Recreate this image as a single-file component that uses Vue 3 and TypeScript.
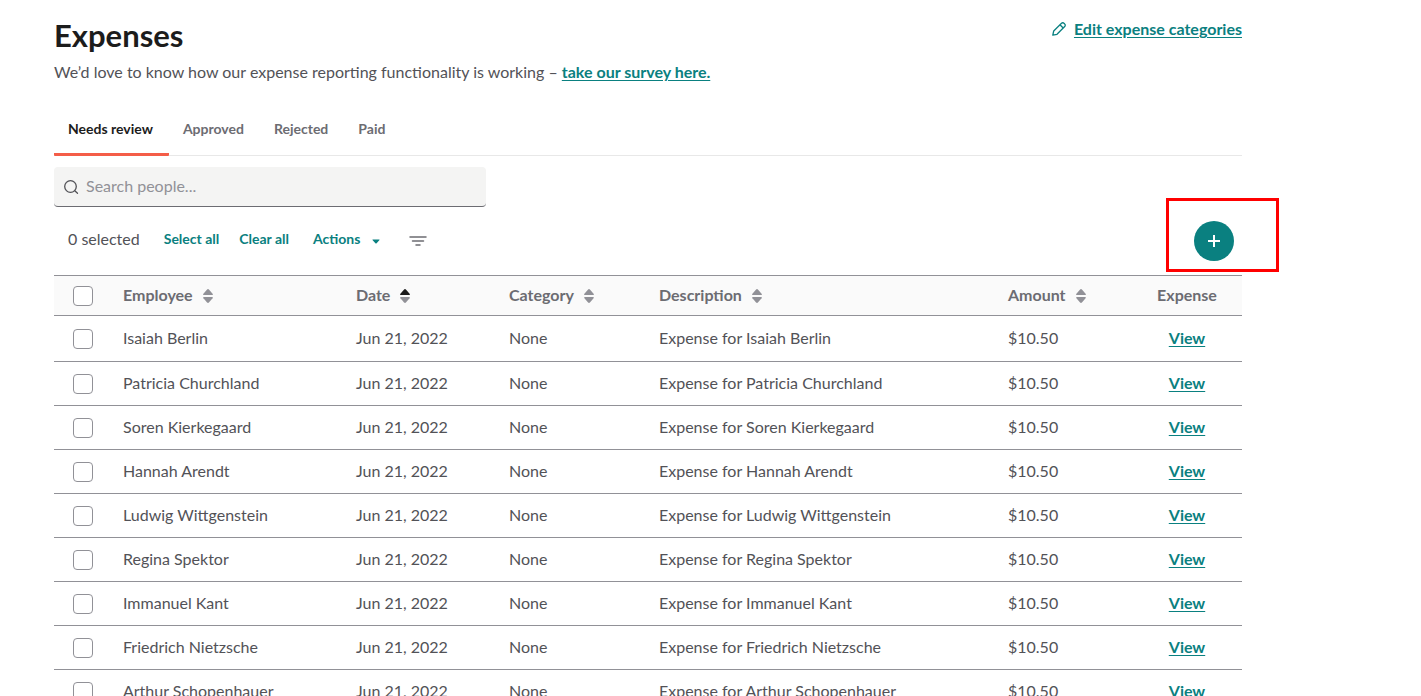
<script setup lang="ts">
import { ref } from 'vue'

interface Column {
  key: string
  label: string
  sortable: boolean
}

const tabs = ['Needs review', 'Approved', 'Rejected', 'Paid']
const activeTab = ref('Needs review')
const search = ref('')
const selected = ref<string[]>([])
const sortKey = ref('date')

const columns: Column[] = [
  { key: 'employee', label: 'Employee', sortable: true },
  { key: 'date', label: 'Date', sortable: true },
  { key: 'category', label: 'Category', sortable: true },
  { key: 'description', label: 'Description', sortable: true },
  { key: 'amount', label: 'Amount', sortable: true },
  { key: 'expense', label: 'Expense', sortable: false },
]

const employees = [
  'Isaiah Berlin',
  'Patricia Churchland',
  'Soren Kierkegaard',
  'Hannah Arendt',
  'Ludwig Wittgenstein',
  'Regina Spektor',
  'Immanuel Kant',
  'Friedrich Nietzsche',
  'Arthur Schopenhauer',
]

function selectAll() {
  selected.value = [...employees]
}
function clearAll() {
  selected.value = []
}
function toggleAll(e: Event) {
  if ((e.target as HTMLInputElement).checked) selectAll()
  else clearAll()
}
</script>

<template>
  <main class="page">
    <header class="head">
      <h1>Expenses</h1>
      <a class="edit" href="#categories">
        <svg width="16" height="16" viewBox="0 0 16 16" fill="none" stroke="currentColor" stroke-width="1.3" stroke-linejoin="round" aria-hidden="true">
          <path d="M1.800 14.200l.9-4.200L10.500 2.300a1.700 1.700 0 0 1 2.500 0l.7.7a1.700 1.700 0 0 1 0 2.500L6 13.300z" />
          <path d="M9 3.800l3.200 3.200" />
        </svg>
        <span>Edit expense categories</span>
      </a>
    </header>
    <p class="intro">
      We’d love to know how our expense reporting functionality is working –
      <a href="#survey">take our survey here.</a>
    </p>

    <nav class="tabs">
      <button
        v-for="tab in tabs"
        :key="tab"
        type="button"
        :class="{ active: tab === activeTab }"
        @click="activeTab = tab"
      >{{ tab }}</button>
    </nav>

    <label class="search">
      <svg width="16" height="16" viewBox="0 0 16 16" fill="none" stroke="currentColor" stroke-width="1.3" stroke-linecap="round" aria-hidden="true">
        <circle cx="7.500" cy="7.500" r="5.800" />
        <path d="M11.800 11.800l2.700 2.500" />
      </svg>
      <input v-model="search" type="text" placeholder="Search people..." aria-label="Search people" />
    </label>

    <div class="toolbar">
      <span class="count">{{ selected.length }} selected</span>
      <button class="text-btn" type="button" @click="selectAll">Select all</button>
      <button class="text-btn" type="button" @click="clearAll">Clear all</button>
      <button class="text-btn actions" type="button">
        Actions
        <svg width="8" height="5" viewBox="0 0 8 5" aria-hidden="true"><path d="M1 .5h6c.6 0 .7.400.3.800L4.600 4.200c-.4.400-.8.400-1.200 0L.7 1.300C.3.900.4.500 1 .5z" fill="currentColor" /></svg>
      </button>
      <button class="filter" type="button" aria-label="Filter">
        <svg width="18" height="12" viewBox="0 0 18 12" fill="none" stroke="currentColor" stroke-width="1.500" stroke-linecap="round" aria-hidden="true">
          <path d="M1 2h16M3.500 6h11M7 10h4" />
        </svg>
      </button>
      <div class="add-wrap">
        <button class="add" type="button" aria-label="Add expense">
          <svg width="12" height="12" viewBox="0 0 12 12" stroke="currentColor" stroke-width="2" aria-hidden="true"><path d="M6 0v12M0 6h12" /></svg>
        </button>
        <span class="callout"></span>
      </div>
    </div>

    <table>
      <colgroup>
        <col class="c-check" />
        <col v-for="c in columns" :key="c.key" :class="'c-' + c.key" />
      </colgroup>
      <thead>
        <tr>
          <th class="check">
            <input type="checkbox" aria-label="Select all rows" :checked="selected.length === employees.length" @change="toggleAll" />
          </th>
          <th v-for="c in columns" :key="c.key" :class="{ center: !c.sortable }">
            <button v-if="c.sortable" class="sort" type="button" @click="sortKey = c.key">
              {{ c.label }}
              <svg width="10" height="16" viewBox="0 -2 10 16" aria-hidden="true">
                <path :class="{ on: sortKey === c.key }" d="M5 0c.4 0 .6.2.9.5l3.700 4.300c.5.600.3 1.200-.5 1.200H.9C.1 6-.1 5.400.4 4.800L4.100.5C4.400.2 4.600 0 5 0z" />
                <path d="M5 14c.4 0 .6-.2.9-.5l3.700-4.300c.5-.600.3-1.200-.5-1.200H.9c-.8 0-1 .6-.5 1.200l3.700 4.300c.3.300.5.500.9.500z" />
              </svg>
            </button>
            <template v-else>{{ c.label }}</template>
          </th>
        </tr>
      </thead>
      <tbody>
        <tr v-for="name in employees" :key="name">
          <td class="check"><input v-model="selected" type="checkbox" :value="name" :aria-label="'Select ' + name" /></td>
          <td>{{ name }}</td>
          <td>Jun 21, 2022</td>
          <td>None</td>
          <td>Expense for {{ name }}</td>
          <td>$10.50</td>
          <td class="center"><a href="#view">View</a></td>
        </tr>
      </tbody>
    </table>
  </main>
</template>

<style>
body {
  background: #fff;
}
</style>

<style scoped>
.page {
  box-sizing: border-box;
  height: 100vh;
  overflow: hidden;
  padding: 15px 179px 0 54px;
  font-family: Lato, 'Open Sans', sans-serif;
  font-size: 16px;
  line-height: 24px;
  color: #525257;
}
button {
  padding: 0;
  border: 0;
  background: none;
  font: inherit;
  color: inherit;
  cursor: pointer;
}
svg {
  display: block;
  flex: none;
}
a {
  color: #0a8080;
  font-weight: 700;
  text-underline-offset: 2px;
}
.head {
  display: flex;
  justify-content: space-between;
}
h1 {
  margin: 0;
  font-size: 31px;
  line-height: 40px;
  font-weight: 700;
  color: #1c1c1c;
}
.edit {
  display: flex;
  align-items: center;
  gap: 7px;
  height: 28px;
  text-decoration: none;
}
.edit span {
  text-decoration: underline;
}
.intro {
  margin: 5px 0 0;
}
.tabs {
  display: flex;
  margin-top: 20px;
  border-bottom: 1px solid #e8e8e8;
  font-size: 14px;
  font-weight: 700;
  color: #6c6c72;
}
.tabs button {
  height: 52px;
  margin-bottom: -1px;
  padding: 0 16px 0 14px;
  border-bottom: 3px solid transparent;
}
.tabs button.active {
  color: #1c1c1c;
  border-bottom-color: #f45d48;
  border-radius: 1px;
}
.search {
  display: flex;
  align-items: center;
  gap: 7px;
  box-sizing: border-box;
  width: 432px;
  max-width: 100%;
  height: 40px;
  margin-top: 11px;
  padding: 0 9px;
  background: #f4f4f3;
  border-bottom: 1px solid #6c6c72;
  border-radius: 4px;
}
.search input {
  flex: 1;
  min-width: 0;
  padding: 0 0 2px;
  border: 0;
  outline: 0;
  background: none;
  font: inherit;
  color: inherit;
}
.search input::placeholder {
  color: #919197;
  opacity: 1;
}
.toolbar {
  display: flex;
  align-items: center;
  height: 68px;
  padding: 0 8px 0 14px;
}
.count {
  margin-right: 24px;
  padding-bottom: 4px;
}
.text-btn {
  margin-right: 20px;
  padding-bottom: 4px;
  font-size: 14px;
  font-weight: 700;
  color: #0a8080;
}
.actions {
  display: flex;
  align-items: center;
  gap: 12px;
  margin: 0 29px 0 4px;
}
.actions svg {
  margin-top: 4px;
}
.filter {
  color: #6c6c72;
}
.add-wrap {
  position: relative;
  margin-left: auto;
}
.add {
  display: flex;
  align-items: center;
  justify-content: center;
  width: 40px;
  height: 40px;
  border-radius: 50%;
  background: #0a8080;
  color: #fff;
}
.callout {
  position: absolute;
  inset: -23px -45px -11px -28px;
  border: 3px solid #f00;
  pointer-events: none;
}
table {
  width: 100%;
  table-layout: fixed;
  border-collapse: separate;
  border-spacing: 0;
}
.c-check { width: 69px; }
.c-employee { width: 233px; }
.c-date { width: 153px; }
.c-category { width: 150px; }
.c-amount { width: 124px; }
.c-expense { width: 110px; }
th,
td {
  box-sizing: border-box;
  padding: 0 0 2px;
  text-align: left;
  border-bottom: 1px solid #919197;
}
th {
  height: 41px;
  background: #fafafa;
  border-top: 1px solid #919197;
  font-weight: 700;
  color: #6c6c72;
}
td {
  height: 44px;
}
tbody tr:first-child td {
  height: 46px;
}
.center {
  text-align: center;
}
.check {
  padding: 0 0 0 19px;
}
.check input {
  display: block;
  appearance: none;
  box-sizing: border-box;
  width: 20px;
  height: 20px;
  margin: 0;
  border: 1px solid #919197;
  border-radius: 4px;
  background: #fff;
}
.check input:checked {
  background: #0a8080;
}
.sort {
  display: flex;
  align-items: center;
  gap: 10px;
}
.sort path {
  fill: #919197;
}
.sort path.on {
  fill: #1c1c1c;
}
</style>
